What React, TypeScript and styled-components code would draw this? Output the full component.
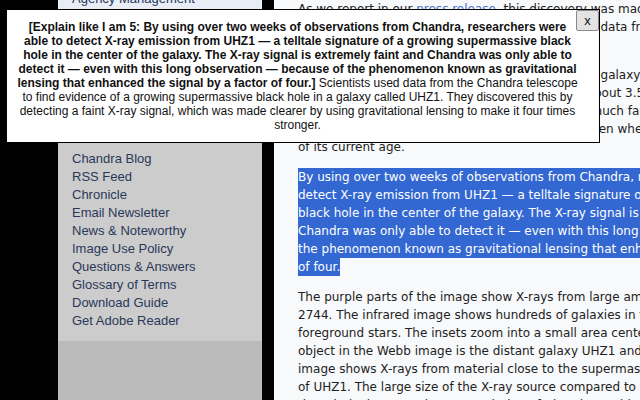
import React from 'react';
import styled, { createGlobalStyle } from 'styled-components';

const GlobalStyle = createGlobalStyle`
    html, body {
        margin: 0;
        padding: 0;
        background: #000;
        overflow: hidden;
    }
`;

const navLinks = [
    'Chandra Blog',
    'RSS Feed',
    'Chronicle',
    'Email Newsletter',
    'News & Noteworthy',
    'Image Use Policy',
    'Questions & Answers',
    'Glossary of Terms',
    'Download Guide',
    'Get Adobe Reader',
];

const introLines = [
    'NASA\u2019s Chandra X-ray Observatory and the Webb data from the galaxy cluster',
    'Abell 2744, known as Pandora\u2019s Cluster.',
];

const galaxyLines = [
    'The team found this black hole in a distant young galaxy called UHZ1, located behind',
    'the cluster Abell 2744. This cluster itself is only about 3.5 billion light-years',
    'light-years from Earth, while the galaxy UHZ1 is much farther away,',
    'away at 13.2 billion light-years so the galaxy is seen when the universe was only 3%',
    'of its current age.',
];

const highlightLines = [
    'By using over two weeks of observations from Chandra, researchers were able to',
    'detect X-ray emission from UHZ1 \u2014 a telltale signature of a growing supermassive',
    'black hole in the center of the galaxy. The X-ray signal is extremely faint and',
    'Chandra was only able to detect it \u2014 even with this long observation \u2014 because of',
    'the phenomenon known as gravitational lensing that enhanced the signal by a factor',
    'of four.',
];

const imageLines = [
    'The purple parts of the image show X-rays from large amounts of hot gas in Abell',
    '2744. The infrared image shows hundreds of galaxies in the cluster, as well as some',
    'foreground stars. The insets zoom into a small area centered on UHZ1. The orange',
    'object in the Webb image is the distant galaxy UHZ1 and the Chandra X-ray',
    'image shows X-rays from material close to the supermassive black hole in the center',
    'of UHZ1. The large size of the X-ray source compared to the galaxy is caused by',
    'the relatively coarse image resolution of Chandra at this distance.',
];

const eli5Lines = [
    '[Explain like I am 5: By using over two weeks of observations from Chandra, researchers were',
    'able to detect X-ray emission from UHZ1 \u2014 a telltale signature of a growing supermassive black',
    'hole in the center of the galaxy. The X-ray signal is extremely faint and Chandra was only able to',
    'detect it \u2014 even with this long observation \u2014 because of the phenomenon known as gravitational',
];

const withBreaks = (lines: string[]) =>
    lines.map((line, index) => (
        <React.Fragment key={index}>
            {index > 0 && <br />}
            {line}
        </React.Fragment>
    ));

export default function App() {
    return (
        <>
            <GlobalStyle />
            <Page>
                <Gutter />
                <Sidebar>
                    <SidebarHeader>
                        <HeaderLink>Agency Management</HeaderLink>
                    </SidebarHeader>
                    <NavSection>
                        {navLinks.map((link) => (
                            <NavLink key={link}>{link}</NavLink>
                        ))}
                    </NavSection>
                    <SidebarFooter />
                </Sidebar>
                <Divider />
                <Content>
                    <Paragraph>
                        As we report in our <TextLink>press release</TextLink>, this discovery was made by combining
                        <br />
                        {withBreaks(introLines)}
                    </Paragraph>
                    <Paragraph>{withBreaks(galaxyLines)}</Paragraph>
                    <Paragraph>
                        <Selected>{withBreaks(highlightLines)}</Selected>
                    </Paragraph>
                    <Paragraph>{withBreaks(imageLines)}</Paragraph>
                </Content>
            </Page>

            {/* explain-like-I-am-5 popup */}
            <Popup>
                <CloseButton>x</CloseButton>
                <PopupText>
                    <strong>
                        {withBreaks(eli5Lines)}
                        <br />
                        lensing that enhanced the signal by a factor of four.]
                    </strong>{' '}
                    Scientists used data from the Chandra telescope
                    <br />
                    to find evidence of a growing supermassive black hole in a galaxy called UHZ1. They discovered this by
                    <br />
                    detecting a faint X-ray signal, which was made clearer by using gravitational lensing to make it four times
                    <br />
                    stronger.
                </PopupText>
            </Popup>
        </>
    );
}

const Page = styled.div`
    display: flex;
    width: 640px;
    height: 400px;
    overflow: hidden;
    background: #000;
`;

const Gutter = styled.div`
    flex: 0 0 58px;
    background: #000;
`;

const Sidebar = styled.nav`
    flex: 0 0 204px;
    display: flex;
    flex-direction: column;
    font-family: 'Liberation Sans', Arial, sans-serif;
    font-size: 13px;
`;

const SidebarHeader = styled.div`
    height: 140px;
    background: #e9edf5;
    padding: 0 14px;
    box-sizing: border-box;
    overflow: hidden;
`;

const HeaderLink = styled.div`
    margin-top: -10px;
    font-size: 13px;
    line-height: 18px;
    color: #24365c;
`;

const NavSection = styled.ul`
    list-style: none;
    margin: 0;
    padding: 10px 14px 11px;
    background: #cccccc;
`;

const NavLink = styled.li`
    line-height: 18px;
    color: #2a3858;
`;

const SidebarFooter = styled.div`
    flex: 1;
    background: #bbbbbb;
`;

const Divider = styled.div`
    flex: 0 0 12px;
    background: #000;
`;

const Content = styled.main`
    flex: 1;
    min-width: 0;
    overflow: hidden;
    background: #f8f9fb;
    padding: 0 0 0 24px;
    font-family: 'DejaVu Sans', Verdana, sans-serif;
    font-size: 12px;
    line-height: 18px;
    color: #222;
    white-space: nowrap;
`;

const Paragraph = styled.p`
    margin: 0 0 12px;
`;

const TextLink = styled.a`
    color: #4a6fd0;
    text-decoration: none;
`;

const Selected = styled.span`
    background: #3367d1;
    color: #fff;
    padding: 2px 0;
`;

const Popup = styled.div`
    position: fixed;
    top: 9px;
    left: 6px;
    width: 594px;
    box-sizing: border-box;
    background: #fff;
    border: 1px solid #000;
    padding: 10px 21px 10px 10px;
`;

const PopupText = styled.div`
    font-family: 'Liberation Sans', Arial, sans-serif;
    font-size: 12px;
    line-height: 14px;
    color: #111;
    text-align: center;
    white-space: nowrap;
`;

const CloseButton = styled.button`
    position: absolute;
    top: 0;
    right: 0;
    width: 23px;
    height: 21px;
    padding: 0;
    border: 1px solid #8a8a8a;
    border-radius: 2px;
    background: #e3e3e3;
    font-family: 'Liberation Sans', Arial, sans-serif;
    font-size: 13px;
    color: #111;
    line-height: 18px;
`;
